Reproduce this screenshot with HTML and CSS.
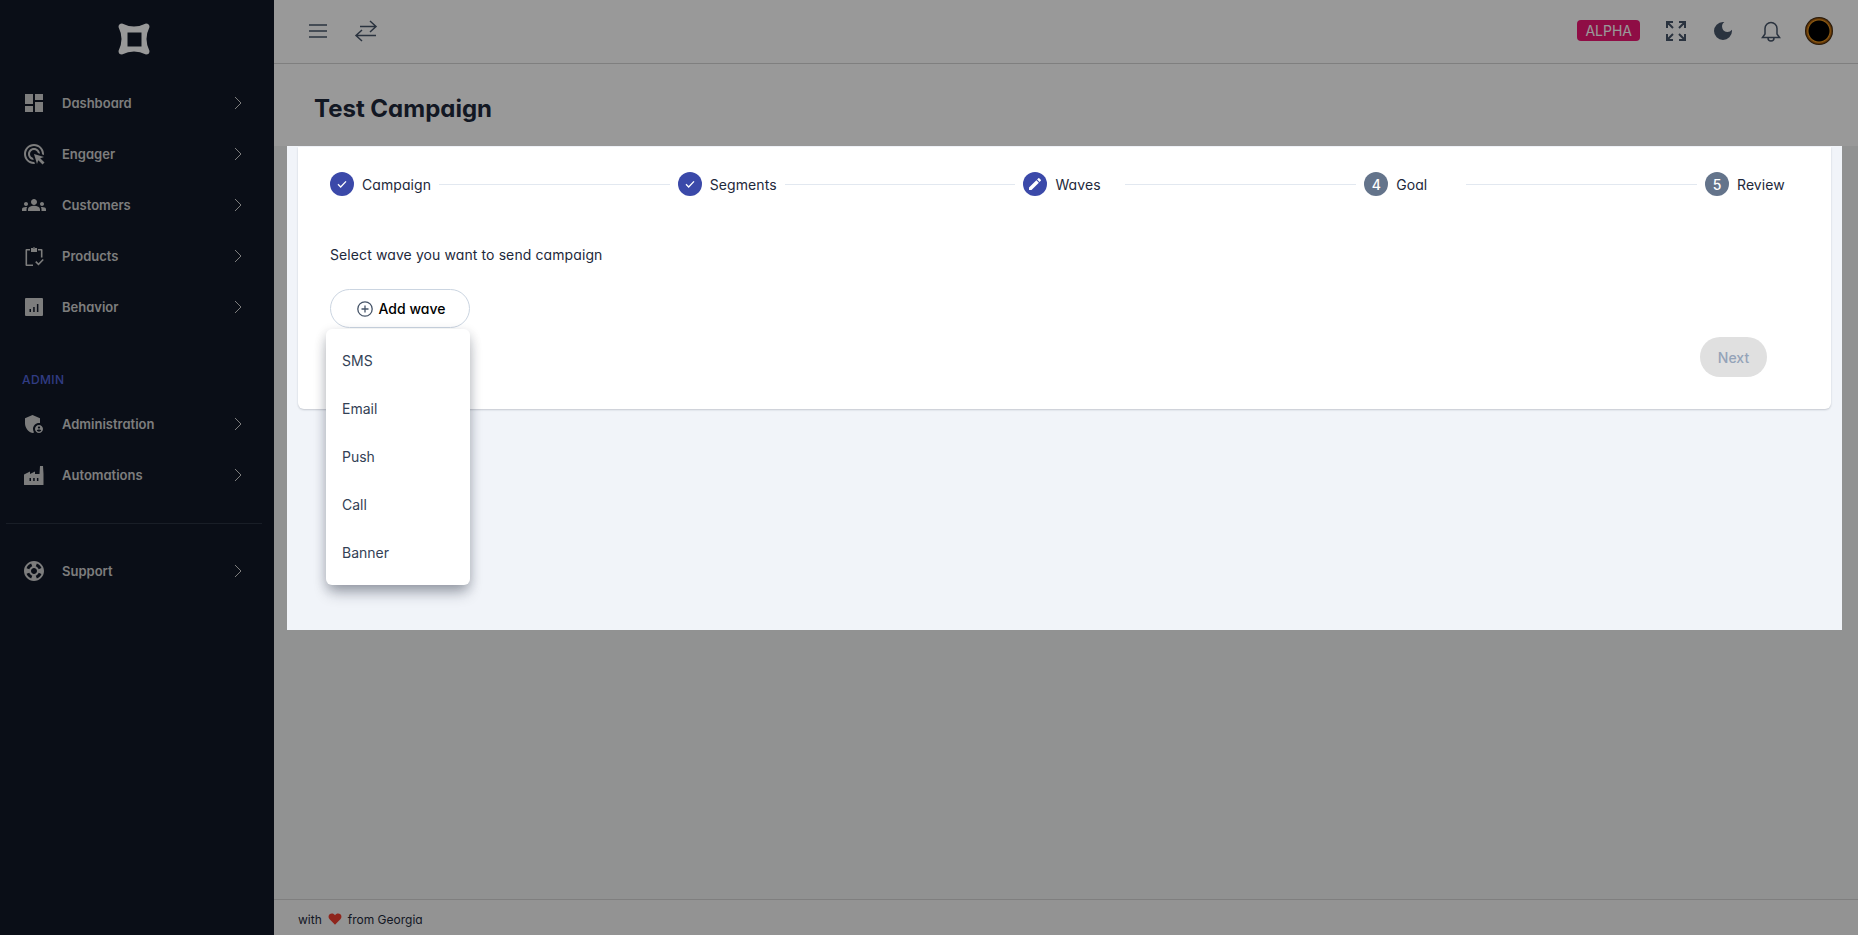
FILE: index.html
```html
<!DOCTYPE html>
<html lang="en">
<head>
    <meta charset="UTF-8" />
    <meta name="viewport" content="width=device-width, initial-scale=1.0">
    <title>Test Campaign</title>
    <link rel="stylesheet" href="styles.css">
</head>
<body>
    <!-- Sidebar -->
    <aside class="sidebar">
        <div class="logo">
            <svg width="32" height="32" viewBox="0 0 32 32" fill="currentColor" fill-rule="evenodd"><path d="M4 .5Q16 6.500 28 .5Q31.500 .5 31.500 4Q25.500 16 31.500 28Q31.500 31.500 28 31.500Q16 25.500 4 31.500Q.5 31.500 .5 28Q6.500 16 .5 4Q.5 .5 4 .5ZM9.500 9.500V23.500H23.500V9.500Z"/></svg>
        </div>
        <nav class="nav-group">
            <a class="nav-item">
                <svg class="nav-icon" viewBox="0 0 24 24"><path d="M3 13h8V3H3v10zm0 8h8v-6H3v6zm10 0h8V11h-8v10zm0-18v6h8V3h-8z"/></svg>
                <span>Dashboard</span>
                <svg class="chevron" viewBox="0 0 8 14"><path d="M1 1l6 6-6 6"/></svg>
            </a>
            <a class="nav-item">
                <svg class="nav-icon" viewBox="0 0 24 24"><path d="M11.710 17.990C8.530 17.840 6 15.220 6 12c0-3.310 2.690-6 6-6 3.220 0 5.840 2.530 5.990 5.710l-2.100-.63C15.480 9.310 13.890 8 12 8c-2.210 0-4 1.790-4 4 0 1.890 1.310 3.480 3.080 3.890l.63 2.100zM22 12c0 .3-.01.6-.04.9l-1.970-.59c.01-.1.01-.21.01-.31 0-4.420-3.580-8-8-8s-8 3.580-8 8 3.580 8 8 8c.1 0 .21 0 .31-.01l.59 1.970c-.3.03-.6.04-.9.04-5.520 0-10-4.480-10-10S6.480 2 12 2s10 4.480 10 10zm-3.770 4.260L22 15l-10-3 3 10 1.260-3.770 4.270 4.270 1.980-1.980-4.280-4.260z"/></svg>
                <span>Engager</span>
                <svg class="chevron" viewBox="0 0 8 14"><path d="M1 1l6 6-6 6"/></svg>
            </a>
            <a class="nav-item">
                <svg class="nav-icon" viewBox="0 0 24 24"><path d="M4 13c1.100 0 2-.9 2-2s-.9-2-2-2-2 .9-2 2 .9 2 2 2zm1.130 1.100C4.760 14.040 4.390 14 4 14c-.99 0-1.930.21-2.780.58C.48 14.900 0 15.620 0 16.430V18h4.500v-1.610c0-.83.23-1.610.63-2.290zM20 13c1.100 0 2-.9 2-2s-.9-2-2-2-2 .9-2 2 .9 2 2 2zm4 3.430c0-.81-.48-1.530-1.220-1.850C21.930 14.210 20.990 14 20 14c-.39 0-.76.04-1.130.1.4.68.63 1.460.63 2.290V18H24v-1.570zm-7.760-2.780c-1.170-.52-2.610-.9-4.240-.9s-3.070.39-4.240.9C6.680 14.130 6 15.210 6 16.390V18h12v-1.610c0-1.180-.68-2.260-1.760-2.740zM12 12c1.660 0 3-1.340 3-3s-1.340-3-3-3-3 1.340-3 3 1.340 3 3 3z"/></svg>
                <span>Customers</span>
                <svg class="chevron" viewBox="0 0 8 14"><path d="M1 1l6 6-6 6"/></svg>
            </a>
            <a class="nav-item">
                <svg class="nav-icon" viewBox="0 0 24 24"><path d="M8 5H4.500a1 1 0 0 0-1 1v15a1 1 0 0 0 1 1H11v-1.600H5.100V6.600H8V5zm8 0h3.500a1 1 0 0 1 1 1v7.500h-1.600V6.600H16V5zM9 4h2a1 1 0 0 1 2 0h2v4H9V4zm3-.6a.6.600 0 1 0 0 1.200.6.600 0 0 0 0-1.200zM13.200 18.200l1.100-1.100 2.200 2.200 4.200-4.400 1.100 1.100-5.300 5.500-3.300-3.300z"/></svg>
                <span>Products</span>
                <svg class="chevron" viewBox="0 0 8 14"><path d="M1 1l6 6-6 6"/></svg>
            </a>
            <a class="nav-item">
                <svg class="nav-icon" viewBox="0 0 24 24"><path fill-rule="evenodd" d="M4 3h16a1 1 0 0 1 1 1v16a1 1 0 0 1-1 1H4a1 1 0 0 1-1-1V4a1 1 0 0 1 1-1zm3.500 11v3h1.500v-3H7.500zm3.700-2v5h1.500v-5h-1.500zm3.700-3v8h1.500V9h-1.500z"/></svg>
                <span>Behavior</span>
                <svg class="chevron" viewBox="0 0 8 14"><path d="M1 1l6 6-6 6"/></svg>
            </a>
        </nav>
        <div class="nav-title">ADMIN</div>
        <nav class="nav-group">
            <a class="nav-item">
                <svg class="nav-icon" viewBox="0 0 24 24"><path d="M17 11c.34 0 .67.04 1 .09V6.270L10.500 3 3 6.270v4.910c0 4.540 3.200 8.790 7.500 9.820.55-.13 1.080-.32 1.600-.55-.69-.98-1.100-2.170-1.100-3.450 0-3.310 2.690-6 6-6z"/><path d="M17 13c-2.210 0-4 1.790-4 4s1.790 4 4 4 4-1.790 4-4-1.790-4-4-4zm0 1.380c.62 0 1.120.51 1.120 1.120s-.51 1.120-1.120 1.120-1.120-.51-1.120-1.120.5-1.120 1.120-1.120zm0 5.370c-.93 0-1.740-.46-2.240-1.170.05-.72 1.510-1.080 2.240-1.080s2.190.36 2.240 1.080c-.5.71-1.310 1.170-2.240 1.170z"/></svg>
                <span>Administration</span>
                <svg class="chevron" viewBox="0 0 8 14"><path d="M1 1l6 6-6 6"/></svg>
            </a>
            <a class="nav-item">
                <svg class="nav-icon" viewBox="0 0 24 24"><path fill-rule="evenodd" d="M2 21.500V11.500L8 8.500v2.500l5-2.500v2.500h4.500l.5-8h3l.5 8v10.500a.5.500 0 0 1-.5.500H2.500a.5.500 0 0 1-.5-.5zM7.500 15v3h1.500v-3H7.500zm3.700 0v3h1.500v-3h-1.500zm3.700 0v3h1.500v-3h-1.500z"/></svg>
                <span>Automations</span>
                <svg class="chevron" viewBox="0 0 8 14"><path d="M1 1l6 6-6 6"/></svg>
            </a>
        </nav>
        <div class="nav-divider"></div>
        <nav class="nav-group">
            <a class="nav-item">
                <svg class="nav-icon" viewBox="0 0 24 24"><path d="M12 2C6.480 2 2 6.480 2 12s4.480 10 10 10 10-4.480 10-10S17.520 2 12 2zm7.460 7.120-2.780 1.150c-.51-1.360-1.580-2.440-2.950-2.940l1.150-2.780c2.100.8 3.770 2.470 4.580 4.570zM12 15c-1.660 0-3-1.340-3-3s1.340-3 3-3 3 1.340 3 3-1.340 3-3 3zM9.130 4.540l1.170 2.780c-1.380.5-2.470 1.590-2.980 2.970L4.540 9.130c.81-2.110 2.480-3.780 4.590-4.590zM4.540 14.870l2.780-1.150c.51 1.380 1.590 2.460 2.970 2.960l-1.170 2.780c-2.100-.81-3.770-2.480-4.580-4.590zm10.340 4.590-1.150-2.780c1.370-.51 2.450-1.590 2.950-2.970l2.780 1.170c-.81 2.100-2.480 3.770-4.580 4.580z"/></svg>
                <span>Support</span>
                <svg class="chevron" viewBox="0 0 8 14"><path d="M1 1l6 6-6 6"/></svg>
            </a>
        </nav>
    </aside>

    <!-- Main column -->
    <div class="main">
        <header class="topbar">
            <div class="topbar-group">
                <svg class="top-icon" viewBox="0 0 24 24"><path d="M3 6h18M3 12h18M3 18h18"/></svg>
                <svg class="top-icon" viewBox="0 0 24 24"><path d="M6 7.500h16M16 2l6 5.500-6 5.500M22 16.500H2M8 11l-6 5.500L8 22"/></svg>
            </div>
            <div class="topbar-group">
                <span class="badge">ALPHA</span>
                <svg class="top-icon thick" viewBox="0 0 24 24"><path d="M3 9V3h6M3 3l6 6M15 3h6v6M21 3l-6 6M3 15v6h6M3 21l6-6M21 15v6h-6M21 21l-6-6"/></svg>
                <svg class="top-icon filled" viewBox="0 0 24 24"><path d="M12 3a9 9 0 1 0 9 9c0-.46-.04-.92-.1-1.360a5.389 5.389 0 0 1-4.400 2.260 5.403 5.403 0 0 1-3.140-9.800c-.44-.06-.9-.1-1.360-.1z"/></svg>
                <svg class="top-icon" viewBox="0 0 24 24"><path d="M18 15V9.500a6 6 0 0 0-12 0V15l-2.500 3.500h17L18 15zM9 18.500v.5a3 3 0 0 0 6 0v-.5"/></svg>
                <div class="avatar"></div>
            </div>
        </header>
        <div class="page-head">
            <h1>Test Campaign</h1>
        </div>

        <!-- Content sits above the backdrop -->
        <section class="content">
            <div class="card">
                <div class="stepper">
                    <div class="step">
                        <span class="step-dot done"><svg viewBox="0 0 24 24"><path d="M6 12.500l4 4 8-8.500"/></svg></span>
                        <span class="step-label">Campaign</span>
                    </div>
                    <div class="step-line"></div>
                    <div class="step">
                        <span class="step-dot done"><svg viewBox="0 0 24 24"><path d="M6 12.500l4 4 8-8.500"/></svg></span>
                        <span class="step-label">Segments</span>
                    </div>
                    <div class="step-line"></div>
                    <div class="step">
                        <span class="step-dot done"><svg class="pencil" viewBox="0 0 24 24"><path d="M3 17.250V21h3.750L17.810 9.940l-3.750-3.750L3 17.250zM20.710 7.040a1 1 0 0 0 0-1.410l-2.340-2.340a1 1 0 0 0-1.410 0l-1.830 1.830 3.750 3.750 1.830-1.830z"/></svg></span>
                        <span class="step-label">Waves</span>
                    </div>
                    <div class="step-line"></div>
                    <div class="step">
                        <span class="step-dot">4</span>
                        <span class="step-label">Goal</span>
                    </div>
                    <div class="step-line"></div>
                    <div class="step">
                        <span class="step-dot">5</span>
                        <span class="step-label">Review</span>
                    </div>
                </div>

                <p class="wave-hint">Select wave you want to send campaign</p>

                <div class="wave-picker">
                    <button class="add-btn">
                        <svg viewBox="0 0 16 16"><circle cx="8" cy="8" r="7.200"/><path d="M8 4.500v7M4.500 8h7"/></svg>
                        Add wave
                    </button>
                    <ul class="wave-menu">
                        <li>SMS</li>
                        <li>Email</li>
                        <li>Push</li>
                        <li>Call</li>
                        <li>Banner</li>
                    </ul>
                </div>

                <div class="card-actions">
                    <button class="next-btn" disabled>Next</button>
                </div>
            </div>
        </section>

        <footer class="footer">
            <span>with</span>
            <svg class="heart" viewBox="0 0 24 24"><path d="M12 22 2.800 12.600C.2 9.900.4 6 2.800 3.900c2.500-2.100 6.300-1.700 8.500.9l.7.9.7-.9c2.200-2.600 6-3 8.500-.9 2.400 2.100 2.600 6 0 8.700L12 22z"/></svg>
            <span>from Georgia</span>
        </footer>
    </div>

    <div class="backdrop"></div>
</body>
</html>
```

FILE: styles.css
```css
:root {
    --sidebar-color: #111827;
    --bg-color: #f1f4f9;
    --primary-color: #3b49a9;
    --step-color: #64748b;
    --text-color: #1e293b;
    --border-color: #e2e8f0;
}

* {
    margin: 0;
    padding: 0;
    box-sizing: border-box;
}

body {
    font-family: Inter, "Liberation Sans", sans-serif;
    font-feature-settings: "cv11";
    background-color: #f2f3f3;
    color: var(--text-color);
    display: flex;
    height: 100vh;
    overflow: hidden;
}

.backdrop {
    position: fixed;
    top: 0;
    left: 0;
    width: 100%;
    height: 100%;
    background-color: rgba(0, 0, 0, 0.4);
    z-index: 10;
}

/* Sidebar */
.sidebar {
    width: 274px;
    flex-shrink: 0;
    background-color: var(--sidebar-color);
    color: #d0d0d0;
    padding-top: 77px;
}

.logo {
    position: absolute;
    top: 23px;
    left: 118px;
    color: #fff;
    line-height: 0;
}

.nav-group {
    display: flex;
    flex-direction: column;
}

.nav-item {
    display: flex;
    align-items: center;
    height: 51px;
    padding-left: 22px;
    font-size: 13px;
    font-weight: 600;
}

.nav-icon {
    width: 24px;
    height: 24px;
    fill: currentColor;
    margin-right: 16px;
    flex-shrink: 0;
}

.chevron {
    width: 8px;
    height: 14px;
    margin-left: auto;
    margin-right: 32px;
    fill: none;
    stroke: currentColor;
    stroke-width: 1;
}

.nav-title {
    margin: 40px 0 10px 22px;
    font-size: 12px;
    line-height: 16px;
    font-weight: 500;
    letter-spacing: 0.4px;
    color: #5265db;
}

.nav-divider {
    height: 1px;
    margin: 23px 12px 21px 6px;
    background-color: #2a3342;
}

/* Main column */
.main {
    flex: 1;
    min-width: 0;
    display: flex;
    flex-direction: column;
}

.topbar {
    height: 64px;
    flex-shrink: 0;
    display: flex;
    justify-content: space-between;
    align-items: center;
    padding: 0 25px 2px 32px;
    background-color: #fff;
    border-bottom: 1px solid #d4d4d4;
    color: #475569;
}

.topbar-group {
    display: flex;
    align-items: center;
    gap: 23.500px;
}

.top-icon {
    width: 24px;
    height: 24px;
    fill: none;
    stroke: currentColor;
    stroke-width: 1.500;
}

.top-icon.thick {
    stroke-width: 2;
}

.top-icon.filled {
    fill: currentColor;
    stroke: none;
}

.badge {
    background-color: #ee1773;
    color: #fff;
    font-size: 14px;
    line-height: 21px;
    padding: 0 8px;
    border-radius: 4px;
    font-feature-settings: normal;
}

.avatar {
    width: 28px;
    height: 28px;
    margin-left: -1px;
    border-radius: 50%;
    background: radial-gradient(circle, #000 0 10px, #e8961e 11px, #b86a12 12px, #241405 14px);
}

.page-head {
    height: 82px;
    flex-shrink: 0;
    display: flex;
    align-items: center;
    padding: 6px 0 0 40px;
    background-color: #fff;
}

.page-head h1 {
    font-size: 24px;
    font-weight: 700;
    color: #1e293b;
}

/* Highlighted content */
.content {
    position: relative;
    z-index: 20;
    height: 484px;
    margin: 0 16px 0 13px;
    padding: 1px 11px 0 11px;
    background-color: var(--bg-color);
}

.card {
    height: 262px;
    background-color: #fff;
    border-radius: 0 0 6px 6px;
    box-shadow: 0 1px 2px rgba(15, 23, 42, 0.2);
    padding: 0 32px;
}

.stepper {
    display: flex;
    align-items: center;
    gap: 8px;
    padding-top: 25px;
}

.step {
    display: flex;
    align-items: center;
    gap: 8px;
    flex-shrink: 0;
}

.step-dot {
    width: 24px;
    height: 24px;
    border-radius: 50%;
    display: flex;
    align-items: center;
    justify-content: center;
    background-color: var(--step-color);
    color: #fff;
    font-size: 14px;
    font-weight: 500;
}

.step-dot.done {
    background-color: var(--primary-color);
}

.step-dot svg {
    width: 16px;
    height: 16px;
    fill: none;
    stroke: #fff;
    stroke-width: 2;
}

.step-dot svg.pencil {
    fill: #fff;
    stroke: none;
}

.step-label {
    min-width: 62px;
    font-size: 14px;
    letter-spacing: 0.07px;
    color: var(--text-color);
}

.step-line {
    flex: 1;
    height: 1px;
    background-color: var(--border-color);
}

.wave-hint {
    margin-top: 49px;
    font-size: 14px;
    line-height: 20px;
    letter-spacing: 0.1px;
}

.wave-picker {
    position: relative;
    margin-top: 24px;
}

.add-btn {
    width: 140px;
    height: 39px;
    display: flex;
    align-items: center;
    justify-content: center;
    gap: 6px;
    padding-left: 2px;
    background-color: #fff;
    border: 1px solid #cbd5e1;
    border-radius: 20px;
    font-family: inherit;
    font-feature-settings: inherit;
    font-size: 14px;
    font-weight: 500;
    color: #000;
}

.add-btn svg {
    width: 16px;
    height: 16px;
    fill: none;
    stroke: #475569;
    stroke-width: 1.300;
}

.wave-menu {
    position: absolute;
    top: 40px;
    left: -4px;
    width: 144px;
    padding: 8px 0;
    list-style: none;
    background-color: #fff;
    border-radius: 6px;
    box-shadow: 0 10px 15px -3px rgba(15, 23, 42, 0.3), 0 4px 12px rgba(15, 23, 42, 0.2);
    font-feature-settings: normal;
}

.wave-menu li {
    height: 48px;
    line-height: 48px;
    padding-left: 16px;
    font-size: 14px;
    color: #334155;
}

.card-actions {
    display: flex;
    justify-content: flex-end;
    margin-top: 9px;
    padding-right: 32px;
}

.next-btn {
    width: 67px;
    height: 40px;
    border: none;
    border-radius: 20px;
    background-color: #e0e0e0;
    color: #94a3b8;
    font-family: inherit;
    font-feature-settings: normal;
    font-size: 14px;
    font-weight: 500;
}

.footer {
    margin-top: auto;
    height: 36px;
    flex-shrink: 0;
    display: flex;
    align-items: center;
    gap: 6px;
    padding: 3px 24px 0;
    border-top: 1px solid #d4d4d4;
    background-color: #f5f5f5;
    font-size: 12px;
}

.heart {
    width: 14px;
    height: 14px;
    fill: #ee3e2f;
}
```
